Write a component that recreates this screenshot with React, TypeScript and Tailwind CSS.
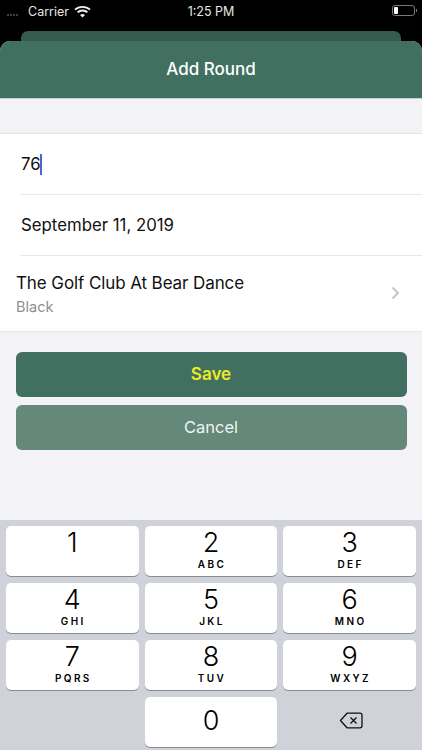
const font = { fontFamily: 'Inter, "Noto Sans", sans-serif' };

function Key({ n, l }: { n: string; l?: string }) {
  return (
    <div className="flex h-[50px] flex-col items-center rounded-[5px] bg-white shadow-[0_1px_0_#8a8b8f] text-black">
      <span className="h-[32px] pt-[1px] text-[27px] leading-[31px] font-light">{n}</span>
      {l ? <span className="text-[10px] leading-[12px] font-semibold tracking-[2.4px] pl-[2px]">{l}</span> : null}
    </div>
  );
}

export default function App() {
  return (
    <div style={font} className="flex h-[750px] w-[422px] flex-col overflow-hidden bg-black antialiased">
      {/* status bar */}
      <div className="relative flex h-[31px] items-start px-[7px] pt-[3px] leading-[15px] text-[#e6e6e6]">
        <div className="mt-[1px] flex h-[15px] items-center">
          <div className="flex w-[17px] gap-[1px] pt-[7px] pl-0">
            <span className="h-[2px] w-[2px] rounded-full bg-[#555]" />
            <span className="h-[2px] w-[2px] rounded-full bg-[#555]" />
            <span className="h-[2px] w-[2px] rounded-full bg-[#555]" />
            <span className="h-[2px] w-[2px] rounded-full bg-[#555]" />
          </div>
          <span className="ml-[4px] text-[12.5px]">Carrier</span>
          <svg className="ml-[5px]" width="17" height="13" viewBox="0 0 17 13" fill="none">
            <path d="M1 4.600C5 .9 12 .9 16 4.600" stroke="#eee" strokeWidth="1.900" />
            <path d="M3.600 7.300C6.300 4.900 10.700 4.900 13.400 7.300" stroke="#eee" strokeWidth="1.900" />
            <path d="M6 9.900C7.400 8.800 9.600 8.800 11 9.900L8.500 12.400Z" fill="#eee" />
          </svg>
        </div>
        <span className="absolute left-0 right-0 top-[3px] mt-[1px] text-center text-[12.5px]">1:25 PM</span>
        <div className="ml-auto mt-[2px] -mr-[2px] flex items-center">
          <div className="flex h-[11px] w-[23px] items-center rounded-[3px] border border-[#777] px-[1px]">
            <span className="h-[7px] w-[3.5px] rounded-[1px] bg-white" />
          </div>
          <span className="ml-[1px] h-[3px] w-[1px] bg-[#777]" />
        </div>
      </div>

      {/* stacked sheet behind */}
      <div className="mx-[21px] h-[10px] shrink-0 rounded-t-[7px] bg-[#365b4e]" />

      {/* sheet */}
      <div className="flex min-h-0 flex-1 flex-col overflow-hidden rounded-t-[10px] bg-[#f2f2f7]">
        <div className="flex h-[58px] shrink-0 items-center justify-center border-b border-[#c9d2cf] bg-[#417060] pt-[1px] text-[17px] font-medium text-white">
          Add Round
        </div>

        <div className="mt-[34px] border-y border-[#e4e4e9] bg-white text-[16.800px] text-[#111]">
          <div className="ml-[20px] flex h-[61px] items-center border-b border-[#e8e8e8]">
            <span className="ml-[1px] mt-[1px]">76</span>
            <span className="-ml-[1px] h-[21px] w-[2px] bg-[#4a63d8]" />
          </div>
          <div className="ml-[20px] flex h-[61px] items-center border-b border-[#e8e8e8] pl-[1px] pt-[2px]">September 11, 2019</div>
          <div className="flex h-[75px] items-center pl-[16px] pr-[22px]">
            <div className="flex-1">
              <div className="text-[17px] leading-[22px] tracking-[-0.1px]">The Golf Club At Bear Dance</div>
              <div className="mt-[4px] text-[14.500px] leading-[18px] text-[#8e8e93]">Black</div>
            </div>
            <svg className="-mt-[1px]" width="9" height="14" viewBox="0 0 9 14" fill="none">
              <path d="M1.500 1.500 7 7l-5.500 5.500" stroke="#c4c4c7" strokeWidth="1.800" />
            </svg>
          </div>
        </div>

        <div className="mx-[15.5px] mt-[19.5px] flex flex-col gap-[8px]">
          <div className="flex h-[45px] items-center justify-center rounded-[6px] bg-[#417060] pt-[2px] text-[17px] font-semibold text-[#eeea22]">Save</div>
          <div className="flex h-[45px] items-center justify-center rounded-[6px] bg-[#64887a] text-[16.500px] text-[#f2f5f3]">Cancel</div>
        </div>

        {/* keyboard */}
        <div className="mt-auto grid h-[230px] shrink-0 grid-cols-3 content-start gap-x-[6px] gap-y-[7px] bg-[#cfd2d9] px-[6px] pt-[6px]">
          <Key n="1" />
          <Key n="2" l="ABC" />
          <Key n="3" l="DEF" />
          <Key n="4" l="GHI" />
          <Key n="5" l="JKL" />
          <Key n="6" l="MNO" />
          <Key n="7" l="PQRS" />
          <Key n="8" l="TUV" />
          <Key n="9" l="WXYZ" />
          <div />
          <div className="flex h-[50px] items-center justify-center rounded-[5px] bg-white pb-[2px] text-[27px] font-light text-black shadow-[0_1px_0_#8a8b8f]">0</div>
          <div className="flex h-[50px] items-center justify-center pb-[3px] pl-[2px]">
            <svg width="24" height="17" viewBox="0 0 24 17" fill="none" stroke="#111">
              <path d="M8 1.200h13a2 2 0 0 1 2 2v10.600a2 2 0 0 1-2 2H8L1.500 8.500Z" strokeWidth="1.300" strokeLinejoin="round" />
              <path d="m11.500 5.500 6 6m0-6-6 6" strokeWidth="1.300" />
            </svg>
          </div>
        </div>
      </div>
    </div>
  );
}
